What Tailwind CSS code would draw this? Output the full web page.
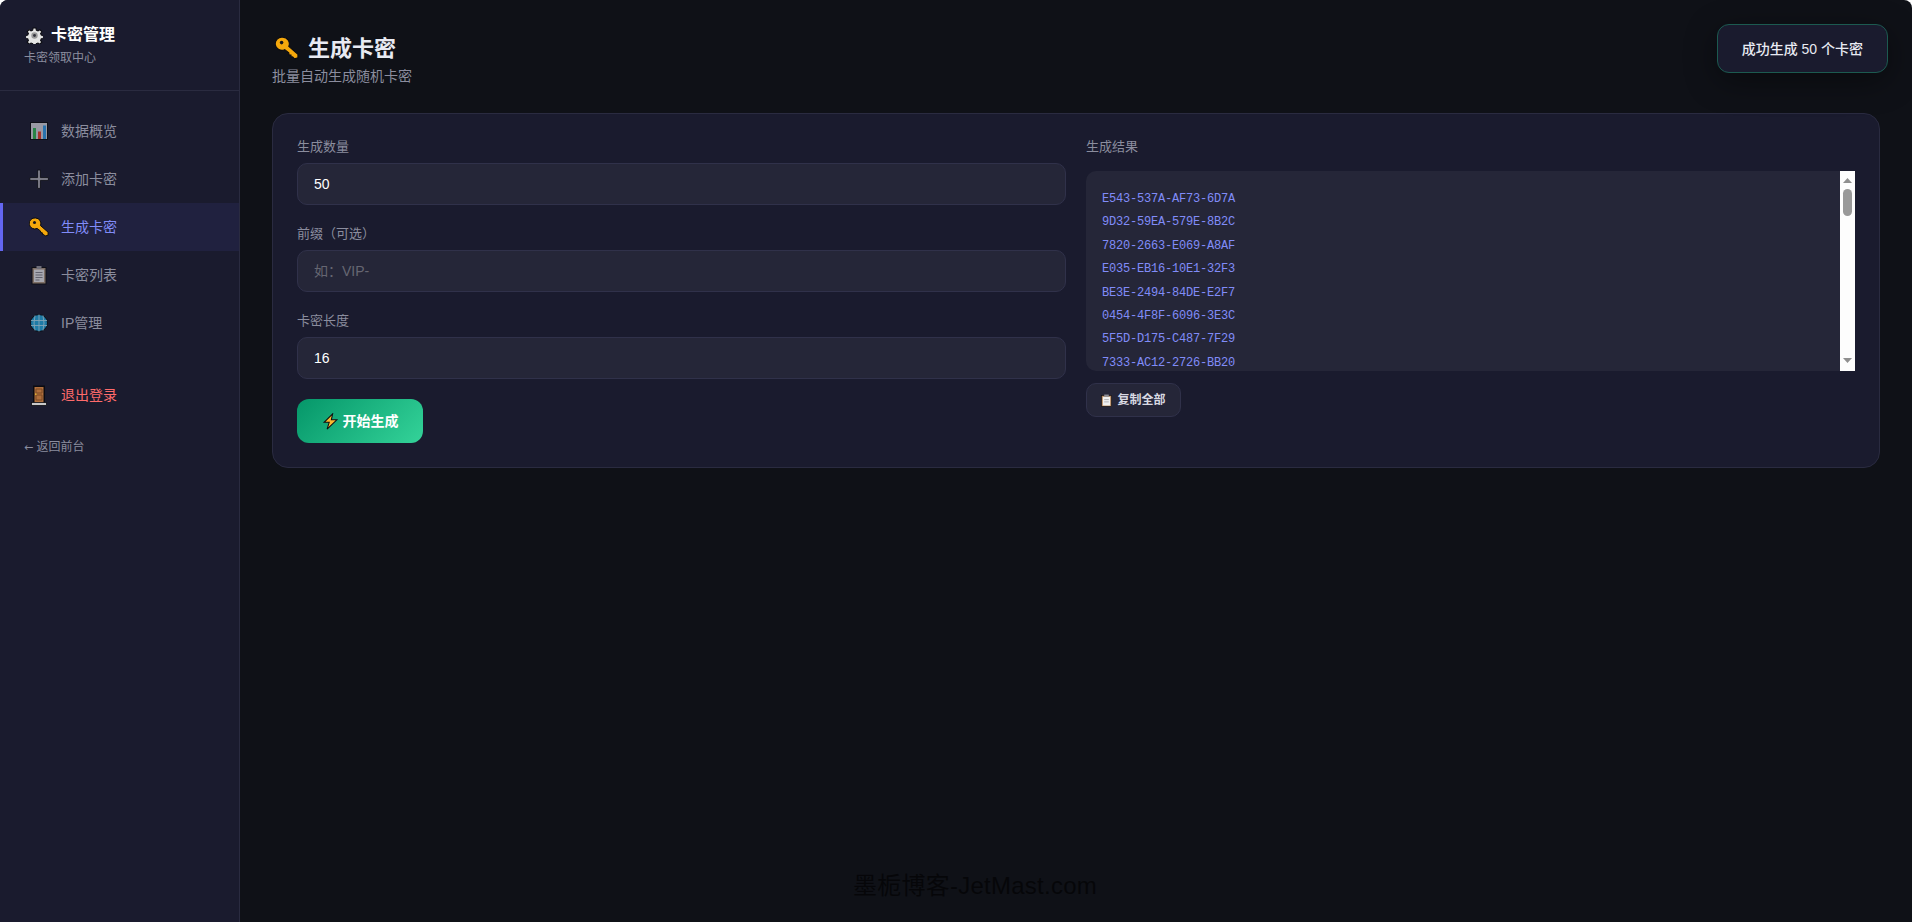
<!doctype html>
<html lang="zh-CN">

<head>
  <meta charset="UTF-8" />
  <meta name="viewport" content="width=device-width, initial-scale=1.0" />
  <title>生成卡密</title>
  <script src="https://cdn.jsdelivr.net/npm/@tailwindcss/browser@4"></script>
</head>

<body class="h-screen overflow-hidden bg-white font-['Liberation_Sans','Noto_Sans_CJK_SC',sans-serif]">
  <div class="relative flex h-full overflow-hidden rounded-t-lg bg-[#0f1117]">

    <!-- 侧边栏 -->
    <aside class="w-[240px] shrink-0 border-r border-[#2a2b40] bg-[#1a1b2e]">
      <div class="h-[91px] border-b border-[#2a2b40] pl-6 pt-[23px]">
        <div class="flex h-6 items-center gap-2 text-base font-semibold text-white">
          <svg class="ml-[2px] h-[17px] w-[17px]" viewBox="0 0 24 24">
            <path fill="#e4e4e4" stroke="#0b0b10" stroke-width="1.5" d="M10 1.5h4l.6 3 2.3 1 2.6-1.7 2.8 2.8-1.7 2.6 1 2.3 3 .6v-.1 4l-3 .6-1 2.3 1.7 2.6-2.8 2.8-2.6-1.7-2.3 1-.6 3h-4l-.6-3-2.3-1-2.6 1.7-2.8-2.8 1.7-2.6-1-2.3-3-.6v-4l3-.6 1-2.3-1.7-2.6 2.8-2.8 2.6 1.7 2.3-1z" />
            <circle cx="12" cy="12" r="4.5" fill="#9a9a9a" />
            <circle cx="12" cy="12" r="2" fill="#33333c" />
          </svg>
          <span>卡密管理</span>
        </div>
        <p class="mt-[1px] text-xs leading-5 text-[#8b8d9e]">卡密领取中心</p>
      </div>

      <nav class="pt-4">
        <a class="flex h-12 items-center gap-3 border-l-[3px] border-transparent pl-[26px] text-sm text-[#8b8d9e]">
          <svg class="h-5 w-5 opacity-75" viewBox="0 0 20 20">
            <rect x="1.5" y="1.5" width="17" height="17" fill="#c4c4cc" stroke="#0b0b10" />
            <rect x="4" y="7" width="3" height="11" fill="#2fa84f" />
            <rect x="9" y="10.5" width="3" height="7.5" fill="#d8392b" />
            <rect x="14" y="4.5" width="3" height="13.5" fill="#2f8fd8" />
          </svg>
          <span>数据概览</span>
        </a>
        <a class="flex h-12 items-center gap-3 border-l-[3px] border-transparent pl-[26px] text-sm text-[#8b8d9e]">
          <svg class="h-5 w-5" viewBox="0 0 20 20">
            <path fill="#83838e" stroke="#0f1018" stroke-width=".9" d="M8.6 1h2.8v7.6H19.4v2.8H11.4v8H8.6v-8H.8V8.6h7.8z" />
          </svg>
          <span>添加卡密</span>
        </a>
        <a class="flex h-12 items-center gap-3 border-l-[3px] border-[#6366f1] bg-[#20213f] pl-[26px] text-sm text-[#818cf8]">
          <svg class="h-5 w-5" viewBox="0 0 20 20">
            <path fill="#f5a80c" stroke="#0b0b10" stroke-width="1" d="M6.5 1a5.5 5.5 0 0 1 5 7.6l7.6 6.6v3L16.3 19l-1.6-1.6-1.2.2-.2-1.8-1.6-.2-.2-1.6-3.4-2.6A5.5 5.5 0 1 1 6.5 1z" />
            <circle cx="5.5" cy="5.5" r="1.5" fill="#15151c" />
          </svg>
          <span>生成卡密</span>
        </a>
        <a class="flex h-12 items-center gap-3 border-l-[3px] border-transparent pl-[26px] text-sm text-[#8b8d9e]">
          <svg class="h-5 w-5 opacity-75" viewBox="0 0 20 20">
            <rect x="3" y="2.5" width="14" height="16.5" fill="#a08b78" stroke="#0b0b10" />
            <rect x="5" y="4.5" width="10" height="12.5" fill="#d6d6da" />
            <rect x="7.5" y="1" width="5" height="3" fill="#8a8a92" />
            <path stroke="#7a7a84" stroke-width="1" d="M6.5 7.5h7M6.5 10h7M6.5 12.5h7M6.5 15h4" />
          </svg>
          <span>卡密列表</span>
        </a>
        <a class="flex h-12 items-center gap-3 border-l-[3px] border-transparent pl-[26px] text-sm text-[#8b8d9e]">
          <svg class="h-5 w-5 opacity-80" viewBox="0 0 20 20">
            <circle cx="10" cy="10" r="8.5" fill="#1f93c4" stroke="#0b0b10" />
            <path fill="none" stroke="#9ac6d8" stroke-width=".9" d="M2 7.5h16M2 12.5h16M10 1.5v17M6 2.5q-2 7.5 0 15M14 2.5q2 7.5 0 15" />
          </svg>
          <span>IP管理</span>
        </a>
        <a class="mt-6 flex h-12 items-center gap-3 border-l-[3px] border-transparent pl-[26px] text-sm text-[#ff6b6b]">
          <svg class="h-[21px] w-5" viewBox="0 0 20 21">
            <rect x="4" y="0.5" width="12" height="18" fill="#0b0b10" />
            <rect x="5.5" y="2" width="9" height="16" fill="#b06f3c" />
            <path fill="none" stroke="#7b4a24" stroke-width="1" d="M7 4h6v4H7zM7 10h6v5H7z" />
            <rect x="6" y="8.5" width="1.5" height="1.5" fill="#e0b030" />
            <rect x="2.5" y="17.5" width="15" height="3" fill="#c9c9c9" stroke="#0b0b10" stroke-width=".8" />
          </svg>
          <span>退出登录</span>
        </a>
        <a class="ml-6 mt-5 block text-xs leading-4 text-[#8b8d9e]"><span class="font-['DejaVu_Sans',sans-serif] text-[11px]">←</span> 返回前台</a>
      </nav>
    </aside>

    <!-- 主内容 -->
    <main class="min-w-0 flex-1 pl-8 pr-8 pt-8">
      <div class="flex h-8 items-center gap-[9px] text-[22px] font-bold text-[#e8eaf2]">
        <svg class="ml-[3px] h-6 w-6" viewBox="0 0 20 20">
          <path fill="#f5a80c" stroke="#0b0b10" stroke-width=".9" d="M6.5 1a5.5 5.5 0 0 1 5 7.6l7.6 6.6v3L16.3 19l-1.6-1.6-1.2.2-.2-1.8-1.6-.2-.2-1.6-3.4-2.6A5.5 5.5 0 1 1 6.5 1z" />
          <circle cx="5.5" cy="5.5" r="1.5" fill="#15151c" />
        </svg>
        <span>生成卡密</span>
      </div>
      <p class="mt-px text-sm leading-[22px] text-[#8b8d9e]">批量自动生成随机卡密</p>

      <section class="mt-[26px] grid grid-cols-2 gap-5 rounded-2xl border border-[#2a2b40] bg-[#1a1b2e] p-6">
        <div>
          <div class="mb-5">
            <label class="mb-[7px] block text-[13px] leading-[18px] text-[#8b8d9e]">生成数量</label>
            <input value="50" class="block h-[42px] w-full rounded-[10px] border border-[#30314a] bg-[#252638] px-4 text-sm text-white outline-none" />
          </div>
          <div class="mb-5">
            <label class="mb-[7px] block text-[13px] leading-[18px] text-[#8b8d9e]">前缀（可选）</label>
            <input placeholder="如：VIP-" class="block h-[42px] w-full rounded-[10px] border border-[#30314a] bg-[#252638] px-4 text-sm text-white outline-none placeholder:text-[#666672]" />
          </div>
          <div class="mb-5">
            <label class="mb-[7px] block text-[13px] leading-[18px] text-[#8b8d9e]">卡密长度</label>
            <input value="16" class="block h-[42px] w-full rounded-[10px] border border-[#30314a] bg-[#252638] px-4 text-sm text-white outline-none" />
          </div>
          <button class="flex h-11 w-[126px] items-center justify-center gap-1 rounded-xl bg-[linear-gradient(135deg,#059669,#34d399)] text-sm font-semibold text-white">
            <svg class="h-[17px] w-[17px]" viewBox="0 0 20 20">
              <path fill="#fbb92e" stroke="#0b0b10" stroke-width="1.2" d="M12.5 1 2.5 11h6l-2.5 8 11.5-11h-6.5z" />
            </svg>
            <span>开始生成</span>
          </button>
        </div>

        <div>
          <label class="mb-[15px] block text-[13px] leading-[18px] text-[#8b8d9e]">生成结果</label>
          <div class="flex h-[200px] overflow-hidden rounded-l-[10px] bg-[#252638]">
            <div class="min-w-0 flex-1 overflow-hidden px-4 pt-[17px] font-['Liberation_Mono',monospace] text-xs leading-[23.4px] tracking-[-0.2px] text-[#818cf8]">
              <div>E543-537A-AF73-6D7A</div>
              <div>9D32-59EA-579E-8B2C</div>
              <div>7820-2663-E069-A8AF</div>
              <div>E035-EB16-10E1-32F3</div>
              <div>BE3E-2494-84DE-E2F7</div>
              <div>0454-4F8F-6096-3E3C</div>
              <div>5F5D-D175-C487-7F29</div>
              <div>7333-AC12-2726-BB20</div>
            </div>
            <!-- 滚动条 -->
            <div class="flex w-[15px] shrink-0 flex-col items-center bg-[#fdfdfd]">
              <svg class="mt-[7px] h-[5px] w-[9px]" viewBox="0 0 9 5"><path fill="#8f8f8f" d="M4.5 0 9 5H0z" /></svg>
              <div class="mt-[6px] h-[27px] w-[9px] rounded-full bg-[#999999]"></div>
              <svg class="mt-auto mb-[8px] h-[5px] w-[9px]" viewBox="0 0 9 5"><path fill="#8f8f8f" d="M0 0h9L4.5 5z" /></svg>
            </div>
          </div>
          <button class="mt-3 flex h-[34px] w-[95px] items-center justify-center gap-[5px] rounded-[10px] border border-[#30314a] bg-[#252638] text-xs font-semibold text-[#d8d9e2]">
            <svg class="h-[13px] w-[11px]" viewBox="0 0 12 14">
              <rect x=".5" y="1.5" width="11" height="12" fill="#b98a5e" stroke="#0b0b10" stroke-width=".7" />
              <rect x="2" y="3" width="8" height="9.5" fill="#f0f0f0" />
              <rect x="3.5" y=".5" width="5" height="2.5" fill="#8d8d95" />
              <path stroke="#9a9aa2" stroke-width=".8" d="M3.5 6h5M3.5 8.5h5" />
            </svg>
            <span>复制全部</span>
          </button>
        </div>
      </section>
    </main>

    <!-- 提示 -->
    <div class="absolute right-6 top-6 flex h-[49px] items-center rounded-xl border border-[#1c5a50] bg-[#1a1b2e] px-6 text-sm font-medium text-[#e8eaf2] shadow-[0_8px_32px_rgba(0,0,0,0.4)]">
      成功生成 50 个卡密
    </div>

    <!-- 水印 -->
    <div class="absolute left-[853px] top-[870px] whitespace-nowrap text-2xl leading-8 tracking-[0.25px] text-black/60">墨栀博客-JetMast.com</div>
  </div>
</body>

</html>
